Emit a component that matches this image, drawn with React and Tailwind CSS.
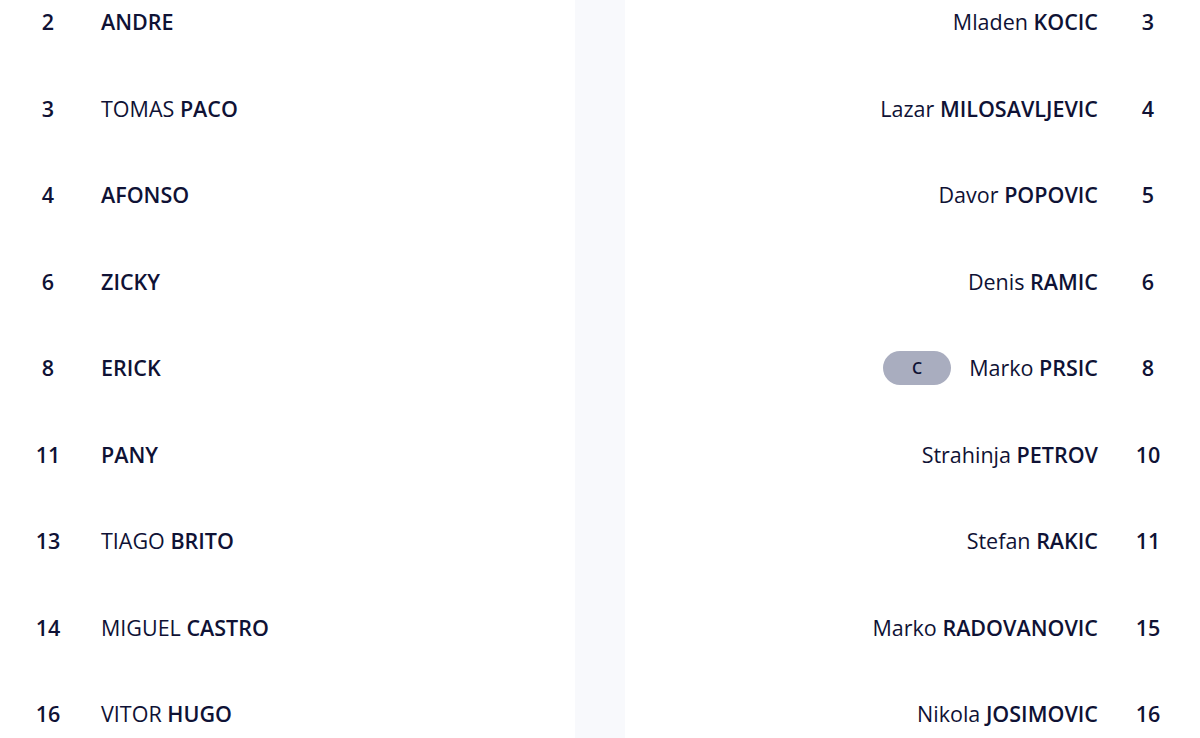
import React from "react";

const home = [
  { num: 2, first: "", last: "ANDRE" },
  { num: 3, first: "TOMAS", last: "PACO" },
  { num: 4, first: "", last: "AFONSO" },
  { num: 6, first: "", last: "ZICKY" },
  { num: 8, first: "", last: "ERICK" },
  { num: 11, first: "", last: "PANY" },
  { num: 13, first: "TIAGO", last: "BRITO" },
  { num: 14, first: "MIGUEL", last: "CASTRO" },
  { num: 16, first: "VITOR", last: "HUGO" },
];

const away = [
  { num: 3, first: "Mladen", last: "KOCIC" },
  { num: 4, first: "Lazar", last: "MILOSAVLJEVIC" },
  { num: 5, first: "Davor", last: "POPOVIC" },
  { num: 6, first: "Denis", last: "RAMIC" },
  { num: 8, first: "Marko", last: "PRSIC", captain: true },
  { num: 10, first: "Strahinja", last: "PETROV" },
  { num: 11, first: "Stefan", last: "RAKIC" },
  { num: 15, first: "Marko", last: "RADOVANOVIC" },
  { num: 16, first: "Nikola", last: "JOSIMOVIC" },
];

const Name = ({ p }) => (
  <span>
    {p.first && <span className="font-normal">{p.first} </span>}
    <span className="font-semibold">{p.last}</span>
  </span>
);

export default function App() {
  return (
    <div
      className="w-[1200px] h-[738px] overflow-hidden bg-white text-[#0f1235] text-[21.5px]"
      style={{ fontFamily: '"Open Sans", sans-serif' }}
    >
      <div className="flex -mt-[21px]">
        {/* Home */}
        <div className="w-[575px] flex flex-col">
          {home.map((p) => (
            <div key={p.num} className="h-[86.5px] flex items-center shrink-0">
              <div className="w-[96px] text-center font-semibold">{p.num}</div>
              <div className="pl-[5px]">
                <Name p={p} />
              </div>
            </div>
          ))}
        </div>

        <div className="w-[50px] bg-[#f8f9fc]" />

        {/* Away */}
        <div className="w-[575px] flex flex-col">
          {away.map((p) => (
            <div key={p.num} className="h-[86.5px] flex items-center justify-end shrink-0">
              {p.captain && (
                <div className="mr-[18px] w-[68px] h-[34px] rounded-full bg-[#a9adbf] flex items-center justify-center text-[16px] font-semibold">
                  C
                </div>
              )}
              <div className="pr-[2px]">
                <Name p={p} />
              </div>
              <div className="w-[100px] pr-[4px] text-center font-semibold">{p.num}</div>
            </div>
          ))}
        </div>
      </div>
    </div>
  );
}
